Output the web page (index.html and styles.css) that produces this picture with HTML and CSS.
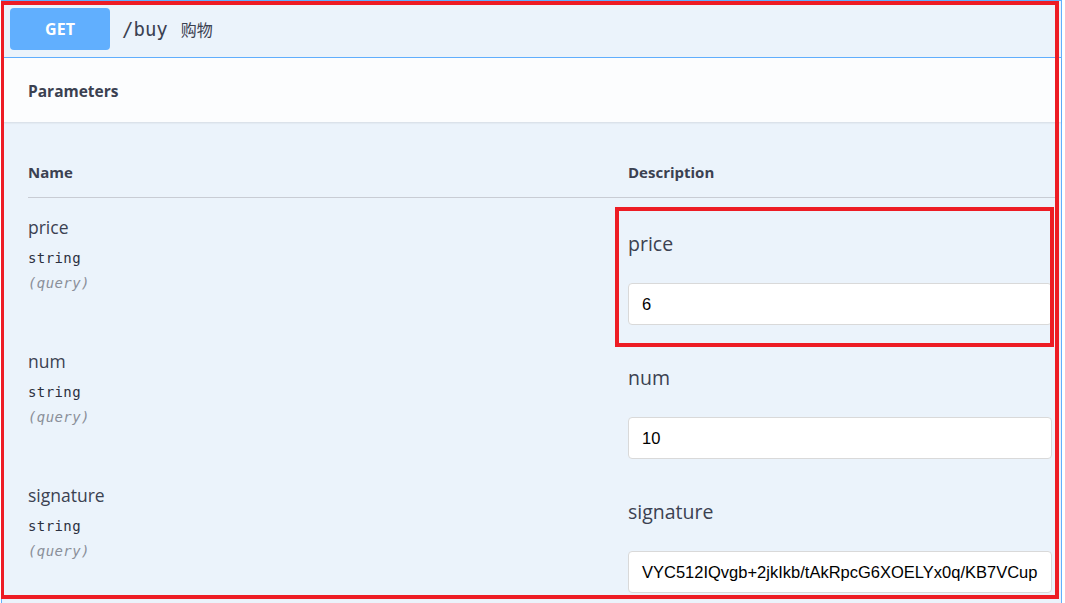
FILE: index.html
```html
<!DOCTYPE html>
<html>
<head>
<meta charset="utf-8">
<link rel="stylesheet" href="styles.css">
</head>
<body>
<div class="opblock">
  <div class="summary">
    <span class="method">GET</span>
    <span class="path">/buy</span>
    <span class="summary-desc">购物</span>
  </div>
  <div class="section-header">
    <h4>Parameters</h4>
  </div>
  <div class="params">
    <div class="params-head">
      <div class="col-name">Name</div>
      <div class="col-desc">Description</div>
    </div>
    <div class="param-row">
      <div class="col-name">
        <div class="p-name">price</div>
        <div class="p-type">string</div>
        <div class="p-in">(query)</div>
      </div>
      <div class="col-desc">
        <div class="d-label">price</div>
        <div class="input">6</div>
      </div>
    </div>
    <div class="param-row">
      <div class="col-name">
        <div class="p-name">num</div>
        <div class="p-type">string</div>
        <div class="p-in">(query)</div>
      </div>
      <div class="col-desc">
        <div class="d-label">num</div>
        <div class="input">10</div>
      </div>
    </div>
    <div class="param-row">
      <div class="col-name">
        <div class="p-name">signature</div>
        <div class="p-type">string</div>
        <div class="p-in">(query)</div>
      </div>
      <div class="col-desc">
        <div class="d-label">signature</div>
        <div class="input">VYC512IQvgb+2jkIkb/tAkRpcG6XOELYx0q/KB7VCup</div>
      </div>
    </div>
  </div>
</div>
<div class="mark mark-outer"></div>
<div class="mark mark-inner"></div>
</body>
</html>
```

FILE: styles.css
```css
html, body {
  margin: 0;
  padding: 0;
  background: #ffffff;
  height: 603px;
  overflow: hidden;
}
body {
  position: relative;
  font-family: "Open Sans", "Noto Sans", sans-serif;
  color: #3b4151;
}
.opblock {
  margin-left: 1px;
  width: 1059px;
  border: 1px solid #61affe;
  background: #ebf3fb;
  height: 640px;
}
.summary {
  display: flex;
  align-items: center;
  padding: 7px 8px;
  height: 42px;
  border-bottom: 1px solid #61affe;
}
.method {
  width: 100px;
  height: 42px;
  background: #61affe;
  border-radius: 4px;
  color: #fff;
  font-weight: 700;
  font-size: 16px;
  display: flex;
  align-items: center;
  justify-content: center;
}
.path {
  margin-left: 12px;
  font-family: "DejaVu Sans Mono", monospace;
  font-size: 19px;
  color: #3b4151;
}
.summary-desc {
  margin-left: 13px;
  font-size: 16px;
  font-family: "Noto Sans CJK SC", sans-serif;
  color: #3b4151;
}
.section-header {
  background: #fcfdfe;
  height: 64px;
  display: flex;
  align-items: center;
  padding-left: 26px;
  box-shadow: 0 1px 2px rgba(0, 0, 0, 0.1);
}
.section-header h4 {
  margin: 1px 0 0;
  font-size: 15.5px;
  font-weight: 700;
}
.params {
  padding: 40px 5px 0 26px;
}
.params-head {
  display: flex;
  font-weight: 700;
  font-size: 15px;
  line-height: 20px;
  padding-bottom: 15px;
  border-bottom: 1px solid #c8ccd4;
}
.col-name {
  width: 600px;
  flex: none;
}
.col-desc {
  flex: 1;
}
.param-row {
  display: flex;
  height: 134px;
}
.param-row .col-name {
  padding-top: 17px;
}
.p-name {
  font-size: 17.5px;
  line-height: 24px;
  margin-bottom: 7px;
}
.p-type {
  font-family: "DejaVu Sans Mono", monospace;
  font-size: 14px;
  line-height: 25px;
  letter-spacing: 0.4px;
  color: #2b3040;
}
.p-in {
  font-family: "DejaVu Sans Mono", monospace;
  font-style: italic;
  font-size: 14px;
  line-height: 25px;
  letter-spacing: 0.4px;
  color: #8a8f99;
}
.param-row .col-desc {
  padding-top: 32px;
}
.d-label {
  font-size: 19.5px;
  line-height: 28px;
  margin-bottom: 25px;
}
.input {
  width: 409px;
  height: 40px;
  box-sizing: content-box;
  padding: 0 0 0 13px;
  background: #fff;
  border: 1px solid #d9d9d9;
  border-radius: 4px;
  font-family: "Liberation Sans", Arial, sans-serif;
  font-size: 16.5px;
  line-height: 40px;
  color: #000;
  white-space: nowrap;
  overflow: hidden;
}
.mark {
  position: absolute;
  border: 3px solid #ed1c24;
  box-sizing: border-box;
  pointer-events: none;
}
.mark-outer {
  left: 1px;
  top: 1px;
  width: 1058px;
  height: 598px;
  border-width: 4px 4px 4px 3px;
}
.mark-inner {
  left: 615px;
  top: 207px;
  width: 439px;
  height: 140px;
  border-width: 4px;
}
```
